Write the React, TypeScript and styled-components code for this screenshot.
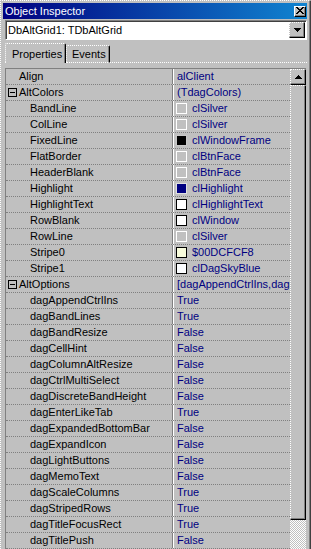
import React from "react";
import styled, { createGlobalStyle } from "styled-components";

const Global = createGlobalStyle`
  html, body { margin: 0; padding: 0; background: #c0c0c0; }
  body { font-family: "Liberation Sans", Arial, sans-serif; font-size: 11px; }
`;

const Window = styled.div`
  width: 311px;
  height: 549px;
  box-sizing: border-box;
  overflow: hidden;
  background: #c0c0c0;
  border-top: 1px dotted #fff;
  border-left: 1px dotted #fff;
  border-right: 1px solid #404040;
  box-shadow: inset -1px 0 #808080;
  padding: 2px 3px 0 2px;
  display: flex;
  flex-direction: column;
`;

const TitleBar = styled.div`
  height: 16px;
  flex: none;
  display: flex;
  align-items: center;
  padding-left: 2px;
  background: linear-gradient(to right, #000080 0%, #1084d0 100%);
  color: #fff;
  font-size: 11px;
`;

const TitleText = styled.span`
  flex: 1;
  line-height: 16px;
  white-space: nowrap;
`;

const CloseButton = styled.div`
  width: 12px;
  height: 11px;
  box-sizing: border-box;
  margin-right: 1px;
  background: #c0c0c0;
  border-top: 1px solid #fff;
  border-left: 1px solid #fff;
  border-right: 1px solid #000;
  border-bottom: 1px solid #000;
  box-shadow: inset -1px -1px #808080;
  display: flex;
  align-items: center;
  justify-content: center;
  padding: 0 1px 1px 0;
`;

const Combo = styled.div`
  margin: 1px 0 0 2px;
  height: 20px;
  flex: none;
  box-sizing: border-box;
  border-top: 1px solid #808080;
  border-left: 1px solid #808080;
  border-right: 1px dotted #fff;
  border-bottom: 1px dotted #fff;
  box-shadow: inset 1px 1px #404040;
  background: #fff;
  display: flex;
  align-items: center;
  padding: 1px 1px 1px 2px;
`;

const ComboText = styled.span`
  flex: 1;
  color: #000;
  font-size: 11px;
  white-space: nowrap;
`;

const RaisedButton = styled.div<{ $h: number }>`
  width: 16px;
  height: ${(p) => p.$h}px;
  flex: none;
  box-sizing: border-box;
  background: #c0c0c0;
  border-top: 1px dotted #fff;
  border-left: 1px dotted #fff;
  border-right: 1px solid #000;
  border-bottom: 1px solid #000;
  box-shadow: inset -1px -1px #808080;
  display: flex;
  align-items: center;
  justify-content: center;
`;

const TabStrip = styled.div`
  margin: 3px 0 0 2px;
  height: 20px;
  flex: none;
  display: flex;
  align-items: flex-end;
`;

const Tab = styled.div<{ $active?: boolean; $w: number }>`
  width: ${(p) => p.$w}px;
  height: ${(p) => (p.$active ? 20 : 18)}px;
  box-sizing: border-box;
  border-top: 1px dotted #fff;
  border-left: 1px dotted #fff;
  border-right: 1px solid #000;
  border-bottom: ${(p) => (p.$active ? "none" : "1px dotted #fff")};
  border-top-left-radius: 2px;
  border-top-right-radius: 2px;
  box-shadow: inset -1px 0 #808080;
  padding-left: ${(p) => (p.$active ? 6 : 5)}px;
  display: flex;
  align-items: center;
  color: #000;
  font-size: 11px;
  white-space: nowrap;
`;

const TabFiller = styled.div`
  flex: 1;
  height: 1px;
  border-bottom: 1px dotted #fff;
  box-sizing: border-box;
`;

const Page = styled.div`
  flex: 1;
  min-height: 0;
  padding-top: 5px;
  display: flex;
  flex-direction: column;
`;

const Grid = styled.div`
  margin-left: 2px;
  width: 301px;
  flex: 1;
  min-height: 0;
  box-sizing: border-box;
  border-top: 1px solid #808080;
  border-left: 1px solid #808080;
  display: flex;
`;

const Rows = styled.div`
  width: 284px;
  display: flex;
  flex-direction: column;
`;

const Row = styled.div`
  height: 16px;
  flex: none;
  box-sizing: border-box;
  border-bottom: 1px dotted #808080;
  display: flex;
`;

const NameCell = styled.div<{ $level: number }>`
  width: 167px;
  box-sizing: border-box;
  border-right: 1px solid #808080;
  padding-left: ${(p) => (p.$level === 0 ? 2 : 24)}px;
  display: flex;
  align-items: center;
  color: #000;
  line-height: 15px;
  white-space: nowrap;
  overflow: hidden;
`;

const BoxSlot = styled.div`
  width: 9px;
  height: 9px;
  margin-right: 2px;
  flex: none;
  display: flex;
  align-items: center;
  justify-content: center;
`;

const ExpandBox = styled.div`
  width: 9px;
  height: 9px;
  box-sizing: border-box;
  border: 1px solid #000;
  background: #c0c0c0;
  display: flex;
  align-items: center;
  justify-content: center;
  &::after {
    content: "";
    width: 5px;
    height: 1px;
    background: #000;
  }
`;

const ValueCell = styled.div`
  flex: 1;
  min-width: 0;
  border-left: 1px solid #fff;
  padding-left: 3px;
  display: flex;
  align-items: center;
  color: #000080;
  line-height: 15px;
  white-space: nowrap;
  overflow: hidden;
`;

const Swatch = styled.div<{ $fill: string; $edge: string }>`
  width: 11px;
  height: 11px;
  flex: none;
  box-sizing: border-box;
  margin: 0 5px 0 -1px;
  background: ${(p) => p.$fill};
  border: 1px solid ${(p) => p.$edge};
`;

const Scrollbar = styled.div`
  width: 16px;
  display: flex;
  flex-direction: column;
`;

const Track = styled.div`
  flex: 1;
  background: repeating-conic-gradient(#fff 0 25%, #c0c0c0 0 50%) 0 0 / 2px 2px;
`;

const CloseGlyph = () => (
  <svg width="8" height="7" viewBox="0 0 8 7" shapeRendering="crispEdges">
    <path
      fill="#000"
      d="M0 0h2v1H0zM6 0h2v1H6zM1 1h2v1H1zM5 1h2v1H5zM2 2h4v1H2zM3 3h2v1H3zM2 4h4v1H2zM1 5h2v1H1zM5 5h2v1H5zM0 6h2v1H0zM6 6h2v1H6z"
    />
  </svg>
);

const DownArrow = () => (
  <svg width="7" height="4" viewBox="0 0 7 4" shapeRendering="crispEdges">
    <path fill="#000" d="M0 0h7v1H0zM1 1h5v1H1zM2 2h3v1H2zM3 3h1v1H3z" />
  </svg>
);

const UpArrow = () => (
  <svg width="7" height="4" viewBox="0 0 7 4" shapeRendering="crispEdges">
    <path fill="#000" d="M3 0h1v1H3zM2 1h3v1H2zM1 2h5v1H1zM0 3h7v1H0z" />
  </svg>
);

type Prop = {
  name: string;
  value: string;
  level: number;
  expandable?: boolean;
  swatch?: { fill: string; edge: string };
};

const silver = { fill: "#c0c0c0", edge: "#fff" };
const white = { fill: "#fff", edge: "#000" };

const props: Prop[] = [
  { name: "Align", value: "alClient", level: 0 },
  { name: "AltColors", value: "(TdagColors)", level: 0, expandable: true },
  { name: "BandLine", value: "clSilver", level: 1, swatch: silver },
  { name: "ColLine", value: "clSilver", level: 1, swatch: silver },
  { name: "FixedLine", value: "clWindowFrame", level: 1, swatch: { fill: "#000", edge: "#c8c8c8" } },
  { name: "FlatBorder", value: "clBtnFace", level: 1, swatch: silver },
  { name: "HeaderBlank", value: "clBtnFace", level: 1, swatch: silver },
  { name: "Highlight", value: "clHighlight", level: 1, swatch: { fill: "#000080", edge: "#e0e0e0" } },
  { name: "HighlightText", value: "clHighlightText", level: 1, swatch: white },
  { name: "RowBlank", value: "clWindow", level: 1, swatch: white },
  { name: "RowLine", value: "clSilver", level: 1, swatch: silver },
  { name: "Stripe0", value: "$00DCFCF8", level: 1, swatch: { fill: "#f8fcdc", edge: "#000" } },
  { name: "Stripe1", value: "clDagSkyBlue", level: 1, swatch: { fill: "#fbfdff", edge: "#000" } },
  { name: "AltOptions", value: "[dagAppendCtrlIns,dagBandLines]", level: 0, expandable: true },
  { name: "dagAppendCtrlIns", value: "True", level: 1 },
  { name: "dagBandLines", value: "True", level: 1 },
  { name: "dagBandResize", value: "False", level: 1 },
  { name: "dagCellHint", value: "False", level: 1 },
  { name: "dagColumnAltResize", value: "False", level: 1 },
  { name: "dagCtrlMultiSelect", value: "False", level: 1 },
  { name: "dagDiscreteBandHeight", value: "False", level: 1 },
  { name: "dagEnterLikeTab", value: "True", level: 1 },
  { name: "dagExpandedBottomBar", value: "False", level: 1 },
  { name: "dagExpandIcon", value: "False", level: 1 },
  { name: "dagLightButtons", value: "False", level: 1 },
  { name: "dagMemoText", value: "False", level: 1 },
  { name: "dagScaleColumns", value: "True", level: 1 },
  { name: "dagStripedRows", value: "True", level: 1 },
  { name: "dagTitleFocusRect", value: "True", level: 1 },
  { name: "dagTitlePush", value: "False", level: 1 },
];

export default function App() {
  return (
    <>
      <Global />
      <Window>
        <TitleBar>
          <TitleText>Object Inspector</TitleText>
          <CloseButton>
            <CloseGlyph />
          </CloseButton>
        </TitleBar>
        <Combo>
          <ComboText>DbAltGrid1: TDbAltGrid</ComboText>
          <RaisedButton $h={16}>
            <DownArrow />
          </RaisedButton>
        </Combo>
        <TabStrip>
          <Tab $active $w={61}>Properties</Tab>
          <Tab $w={44}>Events</Tab>
          <TabFiller />
        </TabStrip>
        <Page>
          <Grid>
            <Rows>
              {props.map((p) => (
                <Row key={p.name}>
                  <NameCell $level={p.level}>
                    {p.level === 0 && <BoxSlot>{p.expandable && <ExpandBox />}</BoxSlot>}
                    {p.name}
                  </NameCell>
                  <ValueCell>
                    {p.swatch && <Swatch $fill={p.swatch.fill} $edge={p.swatch.edge} />}
                    {p.value}
                  </ValueCell>
                </Row>
              ))}
            </Rows>
            <Scrollbar>
              <RaisedButton $h={16}>
                <UpArrow />
              </RaisedButton>
              <RaisedButton $h={435} />
              <Track />
            </Scrollbar>
          </Grid>
        </Page>
      </Window>
    </>
  );
}
